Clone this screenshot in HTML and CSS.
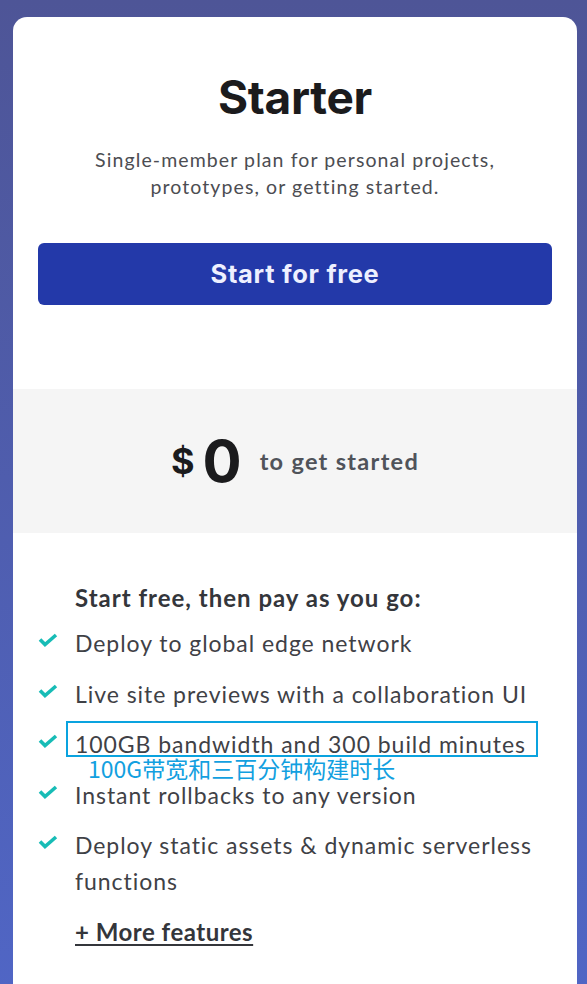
FILE: index.html
```html
<!DOCTYPE html>
<html lang="en">
<head>
    <meta charset="UTF-8">
    <meta name="viewport" content="width=device-width, initial-scale=1.0">
    <title>Starter Plan</title>
    <link rel="stylesheet" href="styles.css">
</head>
<body>
    <div class="card">
        <div class="card-head">
            <h1>Starter</h1>
            <p class="desc">Single-member plan for personal projects, prototypes, or getting started.</p>
            <a class="btn" href="#">Start for free</a>
        </div>

        <div class="price">
            <span class="currency">$</span>
            <span class="amount">0</span>
            <span class="price-note">to get started</span>
        </div>

        <div class="features">
            <h3>Start free, then pay as you go:</h3>
            <ul>
                <li>
                    <svg class="check" viewBox="0 0 20 14"><path d="M2 6.5l5 5L18 2"/></svg>
                    Deploy to global edge network
                </li>
                <li>
                    <svg class="check" viewBox="0 0 20 14"><path d="M2 6.5l5 5L18 2"/></svg>
                    Live site previews with a collaboration UI
                </li>
                <li>
                    <svg class="check" viewBox="0 0 20 14"><path d="M2 6.5l5 5L18 2"/></svg>
                    100GB bandwidth and 300 build minutes
                    <span class="box"></span>
                    <span class="note">100G带宽和三百分钟构建时长</span>
                </li>
                <li>
                    <svg class="check" viewBox="0 0 20 14"><path d="M2 6.5l5 5L18 2"/></svg>
                    Instant rollbacks to any version
                </li>
                <li>
                    <svg class="check" viewBox="0 0 20 14"><path d="M2 6.5l5 5L18 2"/></svg>
                    Deploy static assets &amp; dynamic serverless functions
                </li>
            </ul>
            <a class="more" href="#">+ More features</a>
        </div>
    </div>
</body>
</html>
```

FILE: styles.css
```css
body {
    margin: 0;
    padding: 17px 0 0 13px;
    min-height: 984px;
    box-sizing: border-box;
    overflow: hidden;
    font-family: 'Lato', 'Noto Sans', sans-serif;
    background: linear-gradient(180deg, #4e5597, #5066c6);
}

.card {
    width: 564px;
    height: 1000px;
    background: #fff;
    border-radius: 14px 14px 0 0;
}

.card-head {
    text-align: center;
    padding: 50px 25px 84px;
}

h1 {
    margin: 0;
    font-family: 'Inter', sans-serif;
    font-size: 46px;
    font-weight: 700;
    letter-spacing: -0.3px;
    color: #1b1b1d;
    line-height: 60px;
}

.desc {
    margin: 19px auto 0;
    width: 440px;
    font-size: 19.5px;
    letter-spacing: 1.1px;
    line-height: 27px;
    color: #4c4d52;
}

.btn {
    display: block;
    margin-top: 43px;
    height: 62px;
    line-height: 62px;
    background: #2339a9;
    border-radius: 6px;
    color: #eef0ff;
    font-family: 'Inter', sans-serif;
    font-size: 25.5px;
    font-weight: 700;
    letter-spacing: 0.7px;
    text-decoration: none;
}

.price {
    height: 144px;
    background: #f5f5f5;
    display: flex;
    justify-content: center;
    align-items: center;
    font-family: 'Inter', sans-serif;
    color: #1b1b1d;
}

.currency {
    font-size: 36px;
    font-weight: 700;
    margin-right: 8px;
}

.amount {
    font-size: 58px;
    font-weight: 700;
    letter-spacing: -2px;
    margin-right: 20px;
}

.price-note {
    font-family: 'Lato', sans-serif;
    font-size: 23.5px;
    font-weight: 700;
    letter-spacing: 1.3px;
    color: #50535a;
}

.features {
    padding: 50px 25px 40px 62px;
    color: #3f4146;
}

.features h3 {
    margin: 0 0 12px;
    font-size: 24px;
    font-weight: 700;
    letter-spacing: 1px;
    line-height: 30px;
    color: #34363b;
}

.features ul {
    list-style: none;
    margin: 0;
    padding: 0;
}

.features li {
    position: relative;
    font-size: 23px;
    letter-spacing: 0.95px;
    line-height: 36px;
    margin-bottom: 14.6px;
}

.check {
    position: absolute;
    left: -37px;
    top: 8px;
    width: 20px;
    height: 14px;
    fill: none;
    stroke: #17bcb6;
    stroke-width: 3.6;
}

.box {
    position: absolute;
    left: -9px;
    top: -5px;
    width: 468px;
    height: 32px;
    border: 2px solid #0aa3df;
}

.note {
    position: absolute;
    left: 13px;
    top: 27px;
    font-family: 'Noto Sans CJK SC', sans-serif;
    font-size: 23px;
    letter-spacing: 0;
    line-height: 30px;
    color: #12a0e0;
}

.more {
    display: inline-block;
    margin-top: 3px;
    font-size: 24px;
    font-weight: 700;
    letter-spacing: 0.5px;
    color: #34363b;
    text-decoration: underline;
    text-decoration-thickness: 2px;
    text-underline-offset: 3px;
}
```
